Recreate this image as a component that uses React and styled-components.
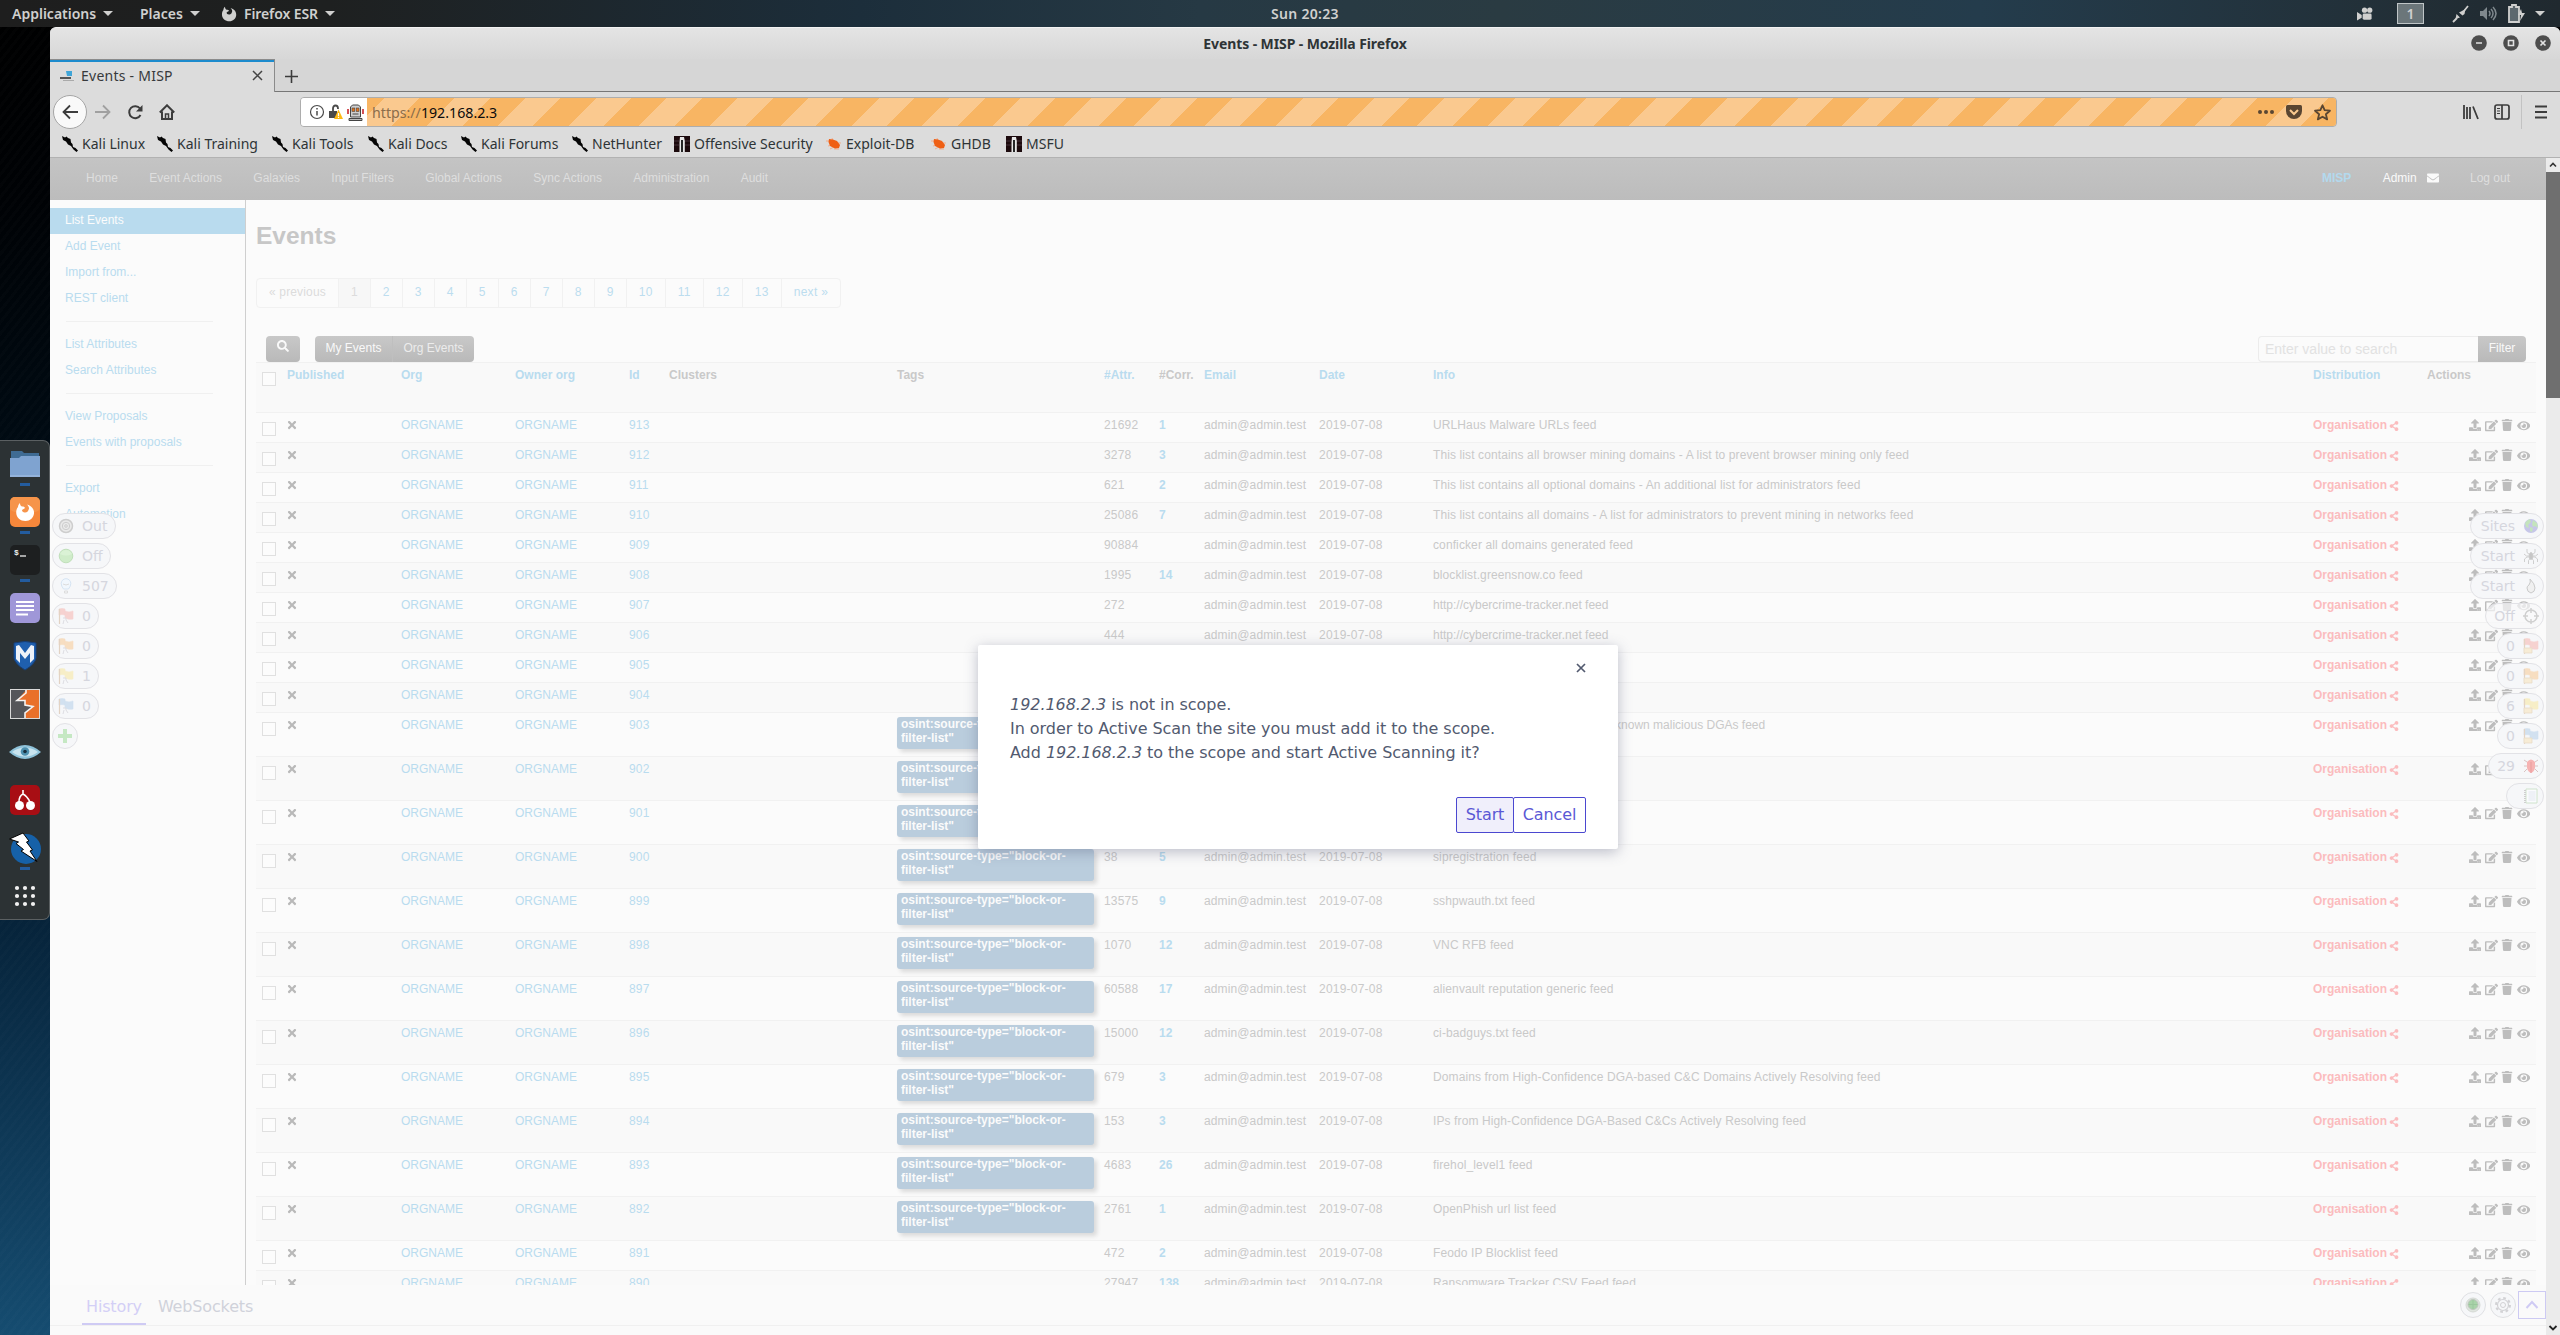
import React from "react";
import styled, { createGlobalStyle, css } from "styled-components";
import { FaUpload, FaEdit, FaTrash, FaEye, FaShareAlt, FaTimes, FaEnvelope, FaSearch } from "react-icons/fa";

const gnome = '"Noto Sans", "Open Sans", sans-serif';
const sans = '"Liberation Sans", Arial, sans-serif';
const hud = '"DejaVu Sans", sans-serif';

const Global = createGlobalStyle`
  * { box-sizing: border-box; }
  body { margin: 0; overflow: hidden; }
`;

const Desktop = styled.div`
  width: 2560px;
  height: 1335px;
  display: grid;
  grid-template-rows: 27px 1308px;
  overflow: hidden;
  font-family: ${gnome};
  background: repeating-linear-gradient(-52deg, rgba(255, 255, 255, 0.012) 0 3px, transparent 3px 7px),
    linear-gradient(#000 0, #000205 200px, #000a12 430px, #06233a 920px, #103d5c 1180px, #154c70 1335px);
`;

const Fit = styled.span`
  letter-spacing: ${(p) => p.$ls || 0}px;
  white-space: nowrap;
`;

/* ---------- Top panel ---------- */
const Panel = styled.header`
  display: grid;
  grid-template-columns: 1fr auto 1fr;
  align-items: center;
  color: #d0d0cf;
  font-size: 14px;
  font-weight: 600;
  background: linear-gradient(90deg, #1e1e1e 0, #1e2020 330px, #1c2e3b 860px, #263944 1200px, #2a3b42 1500px, #243c4c 1980px, #222f37 2400px, #20292f 2560px);
`;
const PanelMenus = styled.div`
  display: flex;
  align-items: center;
  padding-left: 12px;
`;
const PanelMenu = styled.div`
  display: flex;
  align-items: center;
  width: ${(p) => p.$w}px;
  gap: 7px;
`;
const Caret = styled.i`
  border: 5px solid transparent;
  border-top: 5px solid #d0d0cf;
  border-bottom: 0;
`;
const Clock = styled.div`
  padding-left: 50px;
`;
const PanelTray = styled.div`
  display: flex;
  align-items: center;
  justify-content: flex-end;
  padding-right: 15px;
`;
const Workspace = styled.div`
  width: 27px;
  height: 21px;
  margin: 0 28px 0 24px;
  display: grid;
  place-items: center;
  border: 1px solid #bfc5c7;
  background: #6b767a;
`;
const TrayIcon = styled.svg`
  display: block;
  flex: none;
  margin-right: ${(p) => p.$mr || 0}px;
`;

/* ---------- Dock ---------- */
const Body = styled.div`
  display: grid;
  grid-template-columns: 50px 2510px;
  min-height: 0;
`;
const DockArea = styled.aside`
  padding-top: 413px;
`;
const Dock = styled.nav`
  width: 50px;
  height: 480px;
  padding-top: 7px;
  background: #2c3234;
  border: 1px solid #5b6062;
  border-left: 0;
  border-radius: 0 7px 7px 0;
`;
const DockItem = styled.div`
  height: 48px;
  display: grid;
  grid-template-rows: 32px 3px;
  row-gap: 3px;
  justify-items: center;
  align-items: center;
`;
const Running = styled.i`
  width: 10px;
  height: 3px;
  background: #235c9f;
`;

/* ---------- Firefox window ---------- */
const Window = styled.main`
  display: flex;
  flex-direction: column;
  min-height: 0;
  overflow: hidden;
  border-radius: 6px 6px 0 0;
  background: #dcdcdc;
  border-top: 1px solid #f2f2f2;
`;
const TitleBar = styled.div`
  height: 31px;
  display: grid;
  grid-template-columns: 1fr auto 1fr;
  align-items: center;
  padding-bottom: 1px;
  background: linear-gradient(#e4e4e4, #d7d7d7);
  color: #2e3436;
  font-size: 14px;
  font-weight: 700;
`;
const WindowButtons = styled.div`
  display: flex;
  justify-content: flex-end;
  gap: 16px;
  padding-right: 9px;
`;
const TabStrip = styled.div`
  height: 33px;
  display: flex;
  background: #d6d6d6;
`;
const Tab = styled.div`
  width: 225px;
  display: flex;
  align-items: center;
  padding: 0 11px 1px 10px;
  background: #dcdcdc;
  border-top: 1px solid #8b8b8b;
  border-right: 1px solid #8b8b8b;
  box-shadow: inset 0 2px #1d8bcd;
  color: #37393b;
  font-size: 14px;
`;
const TabTitle = styled.span`
  flex: 1;
  padding-left: 7px;
`;
const TabRest = styled.div`
  flex: 1;
  padding: 8px 0 0 9px;
  border-bottom: 1px solid #777;
`;
const Toolbar = styled.div`
  height: 42px;
  display: flex;
  align-items: center;
  padding: 0 13px 2px 3px;
`;
const Back = styled.div`
  width: 34px;
  height: 34px;
  display: grid;
  place-items: center;
  border: 1px solid #a5a5a5;
  border-radius: 50%;
  background: #f9f9f9;
`;
const NavIcons = styled.div`
  display: flex;
  gap: 16px;
  padding-left: 8px;
  width: 213px;
`;
const UrlBar = styled.div`
  width: 2037px;
  height: 30px;
  display: flex;
  border: 1px solid #adadad;
  border-radius: 4px;
  overflow: hidden;
  color: #5a4632;
  font-size: 14.2px;
`;
const Identity = styled.div`
  width: 66px;
  display: flex;
  align-items: center;
  padding-left: 8px;
  gap: 4px;
  background: #fff;
`;
const Address = styled.div`
  flex: 1;
  display: flex;
  align-items: center;
  justify-content: space-between;
  padding: 0 5px;
  background: repeating-linear-gradient(-45deg, #f8b563 0 25px, #fac98f 25px 50px);
`;
const Scheme = styled.span`
  color: #8b6d4a;
`;
const Host = styled.span`
  color: #0c0c0d;
`;
const UrlActions = styled.div`
  display: flex;
  align-items: center;
  gap: 12px;
`;
const ToolbarRight = styled.div`
  flex: 1;
  display: flex;
  justify-content: flex-end;
  align-items: center;
`;
const SidebarIcon = styled.svg`
  margin-left: 15px;
`;
const Separator = styled.i`
  width: 1px;
  height: 34px;
  margin: 0 13px 0 11px;
  background: #c2c2c2;
`;
const Bookmarks = styled.div`
  height: 23px;
  display: flex;
  align-items: center;
  padding: 0 0 4px 12px;
  color: #2e3436;
  font-size: 14px;
`;
const Bookmark = styled.div`
  width: ${(p) => p.$w}px;
  display: flex;
  align-items: center;
  gap: 4px;
`;
const Viewport = styled.div`
  position: relative;
  height: 1178px;
  flex: none;
  display: grid;
  grid-template-columns: 2496px 14px;
  border-top: 1px solid #b2b2b2;
  font-family: ${sans};
  font-size: 12px;
  line-height: 20px;
`;
const Page = styled.div`
  min-width: 0;
  height: 1177px;
  display: grid;
  grid-template-rows: 42px 1085px 50px;
  background: #fbfbfb;
`;
const ScrollBar = styled.div`
  display: grid;
  grid-template-rows: 14px 226px 1fr 14px;
  height: 1177px;
  background: #ebebeb;
`;
const Thumb = styled.i`
  background: #6f6f6f;
`;

/* ---------- MISP page ---------- */
const NavBar = styled.nav`
  display: flex;
  justify-content: space-between;
  align-items: center;
  padding: 0 36px 2px 36px;
  background: linear-gradient(#c4c4c4, #bcbcbc);
  color: #dedede;
`;
const NavGroup = styled.div`
  display: flex;
  gap: 31.3px;
`;
const BrandLink = styled.b`
  color: #b3d9ee;
`;
const AdminLink = styled.span`
  display: flex;
  align-items: center;
  gap: 10px;
  color: #fafafa;
`;
const Columns = styled.div`
  display: grid;
  grid-template-columns: 196px 1fr;
  overflow: hidden;
`;
const SideNav = styled.nav`
  padding-top: 8px;
  border-right: 1px solid #cfcfcf;
  color: #b9dcef;
`;
const SideItem = styled.div`
  height: 26px;
  padding: 2px 15px;
  ${(p) => p.$active && css`background: #b9dbee; color: #fcfcfc;`}
`;
const SideRule = styled.hr`
  height: 1px;
  margin: 9px 32px 10px 16px;
  border: 0;
  background: #f0f0f0;
`;
const Content = styled.section`
  padding: 16px 10px 0 10px;
`;
const Heading = styled.h2`
  margin: 0;
  height: 62px;
  font-size: 24.5px;
  line-height: 40px;
  color: #c7c7c7;
`;
const Pager = styled.div`
  display: flex;
  width: fit-content;
  height: 30px;
  border: 1px solid #f1f1f1;
  border-radius: 4px;
  color: #bcddef;
  letter-spacing: 0.3px;
`;
const PageLink = styled.span`
  padding: 3px 12px 0;
  border-right: 1px solid #f1f1f1;
  color: ${(p) => (p.$muted ? "#dcdcdc" : "inherit")};
  background: ${(p) => (p.$current ? "#f7f7f7" : "none")};
  &:first-child { letter-spacing: 0.15px; }
  &:last-child { border-right: 0; }
`;
const Tools = styled.div`
  display: flex;
  height: 26px;
  margin-top: 28px;
  padding: 0 10px;
`;
const ButtonGroup = styled.div`
  display: flex;
  margin-right: ${(p) => (p.$attached ? 0 : 15)}px;
  border-radius: ${(p) => (p.$attached ? "0 4px 4px 0" : "4px")};
  overflow: hidden;
  background: linear-gradient(#c8c8c8, #b9b9b9);
`;
const ToolButton = styled.span`
  width: ${(p) => p.$w}px;
  padding-top: 2px;
  text-align: center;
  white-space: nowrap;
  color: ${(p) => (p.$bright ? "#f9f9f9" : "#ececec")};
  border-left: ${(p) => (p.$divided ? "1px solid #bfbfbf" : "0")};
`;
const Search = styled.div`
  display: flex;
  margin-left: auto;
`;
const SearchField = styled.div`
  width: 220px;
  padding: 2px 6px;
  border: 1px solid #ececec;
  border-right: 0;
  border-radius: 4px 0 0 4px;
  font-size: 14px;
  color: #e2e2e2;
`;
const Table = styled.div`
  width: 2280px;
  color: #c9c9c9;
`;
const Row = styled.div`
  height: ${(p) => p.$h}px;
  display: grid;
  grid-template-columns: 27px 114px 114px 114px 40px 228px 207px 55px 45px 115px 114px 880px 114px 113px;
  border-top: 1px solid #f1f1f1;
  background: ${(p) => (p.$odd ? "#f9f9f9" : "#fbfbfb")};
`;
const Cell = styled.div`
  padding: 2px 4px;
  white-space: nowrap;
  letter-spacing: ${(p) => p.$ls || 0}px;
  color: ${(p) => (p.$link ? "#b9dcef" : p.$red ? "#fbbcbe" : "inherit")};
  font-weight: ${(p) => (p.$bold ? 700 : 400)};
  svg { vertical-align: -1.5px; margin-left: -1px; }
`;
const CheckBox = styled.i`
  display: block;
  width: 14px;
  height: 14px;
  margin: 7px 0 0 2px;
  border: 1px solid #e0e0e0;
  background: #fcfcfc;
`;
const Tag = styled.div`
  width: 197px;
  height: 32px;
  margin-top: 2px;
  padding: 0 4px 2px;
  border-radius: 3px;
  background: #bacddd;
  box-shadow: 3px 3px 4px #dadada;
  color: #fbfbfb;
  font-weight: 700;
  line-height: 14px;
  white-space: normal;
`;
const Actions = styled.div`
  display: flex;
  padding: 6px 6px 0 46px;
  justify-content: space-between;
  color: #bdbdbd;
`;

/* ---------- HUD overlay ---------- */
const BottomPanel = styled.footer`
  display: flex;
  justify-content: space-between;
  padding-left: 32px;
  font: 16px ${hud};
  letter-spacing: -0.15px;
  background: linear-gradient(#fafafa 40px, #f0f0f0 40px 41px, #fafafa 41px);
`;
const BottomTabs = styled.div`
  display: flex;
`;
const BottomTab = styled.span`
  height: 40px;
  padding: 12px ${(p) => (p.$active ? 4 : 12)}px 0;
  color: ${(p) => (p.$active ? "#d3cff6" : "#d0d2da")};
  border-bottom: ${(p) => (p.$active ? "2px solid #cfcbf4" : "0")};
`;
const BottomButtons = styled.div`
  display: flex;
  padding-top: 6px;
`;
const RoundButton = styled.div`
  width: 26px;
  height: 26px;
  margin: 1px 4px 0 0;
  display: grid;
  place-items: center;
  border: 1px solid #dfe0e3;
  border-radius: 50%;
  background: #f6f7f9;
  &:nth-child(2) { margin-right: 2px; }
`;
const ExpandButton = styled.div`
  width: 28px;
  height: 28px;
  display: grid;
  place-items: center;
  border: 1px solid #cdcaf3;
`;
const Pills = styled.div`
  position: absolute;
  top: 355px;
  ${(p) => (p.$right ? "right: 16px; align-items: flex-end;" : "left: 2px; align-items: flex-start;")}
  display: flex;
  flex-direction: column;
  gap: 4px;
`;
const Pill = styled.div`
  width: ${(p) => p.$w}px;
  height: 26px;
  display: flex;
  align-items: center;
  justify-content: ${(p) => (p.$right ? "flex-end" : "flex-start")};
  gap: 8px;
  padding: 0 ${(p) => (p.$right ? 4 : 5)}px;
  border: 1px solid #e2e2e6;
  border-radius: 13px;
  background: ${(p) => (p.$ghost ? "rgba(248, 248, 250, 0.7)" : "#f6f7f9")};
  color: #d5d6de;
  font: 14px ${hud};
`;
const Dialog = styled.div`
  position: absolute;
  left: 928px;
  top: 487px;
  width: 640px;
  height: 204px;
  padding: 12px 32px 0;
  display: flex;
  flex-direction: column;
  border-radius: 2px;
  background: #fff;
  box-shadow: 0 3px 14px rgba(70, 75, 110, 0.35);
  color: #525a6f;
  font: 16px/24px ${hud};
  letter-spacing: -0.05px;
`;
const DialogClose = styled.svg`
  flex: none;
  align-self: flex-end;
  margin: 6px 0 0;
`;
const Message = styled.p`
  margin: 20px 0 32px;
`;
const DialogButtons = styled.div`
  display: flex;
  justify-content: flex-end;
`;
const DialogButton = styled.button`
  width: ${(p) => p.$w}px;
  height: 36px;
  margin: 0 0 0 -1px;
  padding: 0 0 2px;
  border: 1px solid #4b48d0;
  border-radius: 2px;
  background: ${(p) => (p.$primary ? "#f0effb" : "#fff")};
  color: #5b58d5;
  font: 16px ${hud};
  letter-spacing: -0.1px;
`;

/* ---------- Drawings ---------- */
const KaliMark = () => (
  <svg width="16" height="16" viewBox="0 0 16 16">
    <path d="M0 0l3 1.500L4.500.5 6 2l2.500 1 .5 3.500 1.500 1.500.5 3 2.500 1L16 14.500 14.500 16l-3-2.500L9 10 6 8.500 4 5.500 1 4z" fill="#050505" />
  </svg>
);
const OffsecMark = () => (
  <svg width="16" height="16" viewBox="0 0 16 16">
    <rect width="16" height="16" fill="#1c0a0d" />
    <path d="M0 5h5M11 5h5M0 9h5M11 9h5" stroke="#44303a" />
    <path d="M6 1h4l.8 4v11H5.500V6z" fill="#e8e8e8" />
    <path d="M8 4v12" stroke="#111" strokeWidth="1.800" />
  </svg>
);
const BugMark = () => (
  <svg width="16" height="16" viewBox="0 0 16 16">
    <path d="M0 5h4M2 10l4-1M4 13l4-2M6 2l1 3M12 7h3M8 13h5" stroke="#f2ae8c" strokeWidth="1" />
    <path d="M3 3l4 .5L11 5l3 4-1 3-4 .5L4 10 2.500 6z" fill="#ef5f14" />
  </svg>
);
const marks = { kali: KaliMark, off: OffsecMark, bug: BugMark };

const Firefox = ({ size, color }) => (
  <svg width={size} height={size} viewBox="0 0 20 20">
    <path fill={color} d="M5 1c0 2 .6 3 2 3.600C8.600 4.600 9.500 5 10 6c-.6 1-2 1-3 2 0 1.500 1 2.500 3 2.500 1.500 0 3-.8 3.500-2.500C14.500 6.500 14 4.500 12 2.500 16 3.500 19.500 7 19 11.500 18.500 16 15 19 10.500 19 5.500 19 1.200 15.500 1.200 10.500 1.200 8 2 6 3 5 3 3 4 2 5 1z" />
  </svg>
);

const DockArt = {
  folder: (
    <svg width="30" height="26" viewBox="0 0 30 26">
      <path d="M1 0h11l2 2h15v8H1z" fill="#3f6b93" />
      <path d="M0 7h9l2-2h19v21H0z" fill="#7fa3d0" />
      <path d="M0 25h30" stroke="#a9c2e4" />
    </svg>
  ),
  firefox: (
    <svg width="30" height="30" viewBox="0 0 30 30">
      <rect width="30" height="30" rx="5" fill="#f5873b" />
      <rect width="30" height="15" rx="5" fill="#f6944a" />
      <g transform="translate(5 5)"><Firefox size={20} color="#fff" /></g>
    </svg>
  ),
  terminal: (
    <svg width="30" height="30" viewBox="0 0 30 30">
      <rect width="30" height="30" rx="5" fill="#1d1f20" />
      <text x="4" y="10" fill="#eee" fontSize="8" fontFamily="Liberation Mono, monospace" fontWeight="700">$</text>
      <path d="M10 11h6" stroke="#eee" strokeWidth="1.300" />
    </svg>
  ),
  notes: (
    <svg width="30" height="30" viewBox="0 0 30 30">
      <rect width="30" height="30" rx="5" fill="#9f97d8" />
      <path d="M6 9h18M6 13h18M6 17h18M6 21.500h12" stroke="#fff" strokeWidth="2" />
    </svg>
  ),
  metasploit: (
    <svg width="24" height="30" viewBox="0 0 24 30">
      <path d="M1 2q11-3 22 0v15q-1 6-11 12Q2 23 1 17z" fill="#1f5fae" stroke="#173f77" />
      <path d="M3 18V5l3-1 6 8 6-8 3 1v13l-4 4V12l-5 6-5-6v10z" fill="#eef2f8" />
    </svg>
  ),
  burp: (
    <svg width="30" height="30" viewBox="0 0 30 30">
      <rect x=".5" y=".5" width="29" height="29" fill="#55565a" stroke="#d9d9d9" />
      <path d="M16 1h13v28H15v-5l8-6.500-8-1.500v-4.500H7z" fill="#e9702a" />
      <path d="M16 1v3l-9 7.500h8V16l8 1.500-8 6.500v5" fill="none" stroke="#f3f3f3" strokeWidth="1.600" />
    </svg>
  ),
  eye: (
    <svg width="32" height="16" viewBox="0 0 32 16">
      <path d="M0 8Q8 1 16 1t16 7q-8 7-16 7T0 8z" fill="#8fc3da" />
      <path d="M3 8q6-4.500 13-4.500T29 8q-6 4.500-13 4.500T3 8z" fill="#c9e4ef" />
      <circle cx="16" cy="7.500" r="4.300" fill="#4d90af" />
      <circle cx="16" cy="7.500" r="1.800" fill="#18303f" />
    </svg>
  ),
  cherry: (
    <svg width="30" height="30" viewBox="0 0 30 30">
      <rect width="30" height="30" rx="5" fill="#a80e14" />
      <path d="M9 17q0-6 4-8V5M13 9q4 2 7 8" fill="none" stroke="#fff" strokeWidth="1.600" />
      <circle cx="9.500" cy="20.500" r="4.500" fill="#fff" />
      <circle cx="20.500" cy="20.500" r="4.500" fill="#fff" />
    </svg>
  ),
  zap: (
    <svg width="34" height="32" viewBox="0 0 34 32">
      <circle cx="18" cy="17" r="15" fill="#1661a8" />
      <path d="M1.500 7L15 1l6 8-2.500 1 6 8-2.500 1 7 10.500L13 19l2.500-1.500L8 11.500 10.500 10z" fill="#fff" stroke="#000" />
    </svg>
  ),
  grid: (
    <svg width="22" height="22" viewBox="0 0 22 22" fill="#f1f1f1">
      {[3, 11, 19].map((y) => [3, 11, 19].map((x) => <circle key={x + "-" + y} cx={x} cy={y} r="2.100" />))}
    </svg>
  ),
};
const dock = [["folder", 1], ["firefox", 1], ["terminal", 1], ["notes"], ["metasploit"], ["burp"], ["eye"], ["cherry"], ["zap", 1], ["grid"]];

const Flag = ({ color, right }) => (
  <svg width="16" height="16" viewBox="0 0 16 16">
    <path d="M1 1q3-1 6 0v6q-3-1-6 0zM7 3q4 2 8 0v8q-4 1-8-1z" fill={color} stroke={color} strokeWidth=".6" opacity=".9" />
    <path d="M1.500 1v15" stroke="#e3d3c3" strokeWidth="1.200" />
    {right ? <path d="M1 10h8v5H1z" fill="#f7ecd6" stroke="#e9dcc8" strokeWidth=".8" /> : <path d="M5 10h3v2l2 3M6 12l-1 4" fill="none" stroke="#dddde2" />}
  </svg>
);
const HudArt = {
  target: (
    <svg width="16" height="16" viewBox="0 0 16 16" fill="none" stroke="#cdcdcd">
      <circle cx="8" cy="8" r="6.500" strokeWidth="1.500" fill="#eaeaea" />
      <circle cx="8" cy="8" r="3.700" /><circle cx="8" cy="8" r="1.300" />
    </svg>
  ),
  green: (
    <svg width="16" height="16" viewBox="0 0 16 16">
      <circle cx="8" cy="8" r="6.800" fill="#cfecc9" stroke="#c0dfba" />
      <path d="M2 6q6 3 12 0-2-4-6-4T2 6z" fill="#daf2d5" />
    </svg>
  ),
  bulb: (
    <svg width="16" height="16" viewBox="0 0 16 16" fill="#f1f7fd" stroke="#d5e4f3">
      <path d="M5.500 11Q3.200 8 3.200 5.500a4.800 4.800 0 0 1 9.600 0Q12.800 8 10.500 11z" />
      <path d="M5 6q3 2 6 0M6.500 13h3v2h-3z" stroke="#dcdcdc" fill="none" />
    </svg>
  ),
  plus: (
    <svg width="14" height="14" viewBox="0 0 14 14"><path d="M5 0h4v5h5v4H9v5H5V9H0V5h5z" fill="#c5e8c3" /></svg>
  ),
  globe: (
    <svg width="16" height="16" viewBox="0 0 16 16">
      <circle cx="8" cy="8" r="7" fill="#c6c6e8" />
      <path d="M2 5q2-3 5-4l1 3-3 3 1 3-3-1zM10 2l4 3 1 5-3-2-2 1-1-3z" fill="#c4e4bd" />
      <path d="M7 9l3 1-1 4-2-1z" fill="#c4e4bd" />
    </svg>
  ),
  spider: (
    <svg width="16" height="16" viewBox="0 0 16 16" fill="none" stroke="#c9c9c9" strokeWidth=".9">
      <path d="M7 7L4 4.500V1M7 8H3.500L1 6M7 9H4l-2.500 2v3M7.500 10l-2 2.500V16M9 7l3-2.500V1M9 8h3.500L15 6M9 9h3l2.500 2v3M8.500 10l2 2.500V16" />
      <ellipse cx="8" cy="8" rx="1.800" ry="3.500" fill="#c6c6c6" />
    </svg>
  ),
  flame: (
    <svg width="16" height="16" viewBox="0 0 16 16">
      <path d="M7 1q5 5 5 9t-4 5q-4-1-4-5 0-2 2-3 2-3 1-6z" fill="#f0f0f0" stroke="#cacaca" />
    </svg>
  ),
  cross: (
    <svg width="16" height="16" viewBox="0 0 16 16" fill="none" stroke="#cfcfcf" strokeWidth="1.500">
      <circle cx="8" cy="8" r="6" /><path d="M8 0v5M8 11v5M0 8h5M11 8h5" />
    </svg>
  ),
  bug: (
    <svg width="16" height="16" viewBox="0 0 16 16">
      <path d="M4 4L1 2M4 8H1M4 11l-3 3M12 4l3-2M12 8h3M12 11l3 3" stroke="#d9c2c2" />
      <path d="M4 4q4-5 8 0v6q-1 4-4 5-3-1-4-5z" fill="#f6b3b3" /><path d="M8 4v11" stroke="#e99c9c" />
    </svg>
  ),
  note: (
    <svg width="16" height="16" viewBox="0 0 16 16">
      <path d="M3 1h11v14H3z" fill="#fafbfd" stroke="#cfe3cc" /><path d="M5.500 4h7M5.500 6h7M5.500 8h7M5.500 10h7M5.500 12h7" stroke="#e2e7f0" />
      <path d="M2 2v13" stroke="#cfcfcf" strokeDasharray="1 1" strokeWidth="2" />
    </svg>
  ),
  gear: (
    <svg width="18" height="18" viewBox="0 0 18 18" fill="none" stroke="#d2d2d5">
      <circle cx="9" cy="9" r="7" strokeWidth="2" strokeDasharray="2.750 2.750" /><circle cx="9" cy="9" r="5.500" strokeWidth="1.200" /><circle cx="9" cy="9" r="2.500" />
    </svg>
  ),
  radar: (
    <svg width="16" height="16" viewBox="0 0 16 16">
      <circle cx="8" cy="8" r="7" fill="#dfe5df" stroke="#d5d9d5" /><circle cx="8" cy="7.500" r="5" fill="#a9d3a9" stroke="#bfc6bf" />
      <path d="M8 3v9M3.500 7.500h9" stroke="#9bc79d" />
    </svg>
  ),
};
const red = "#f7cfcc", orange = "#f8dcbc", yellow = "#f8eec2", blue = "#cfdff0";
const leftPills = [
  [64, "Out", HudArt.target], [59, "Off", HudArt.green], [65, "507", HudArt.bulb],
  [47, "0", <Flag color={red} />], [47, "0", <Flag color={orange} />], [47, "1", <Flag color={yellow} />], [47, "0", <Flag color={blue} />],
  [26, "", HudArt.plus],
];
const rightPills = [
  [74, "Sites", HudArt.globe], [74, "Start", HudArt.spider], [74, "Start", HudArt.flame], [59, "Off", HudArt.cross, true],
  [47, "0", <Flag right color={red} />], [47, "0", <Flag right color={orange} />], [47, "6", <Flag right color={yellow} />], [47, "0", <Flag right color={blue} />],
  [56, "29", HudArt.bug], [38, "", HudArt.note],
];

/* ---------- Data ---------- */
const bookmarks = [
  [95, "Kali Linux", "kali"], [115, "Kali Training", "kali"], [96, "Kali Tools", "kali"], [93, "Kali Docs", "kali"], [111, "Kali Forums", "kali"],
  [102, "NetHunter", "kali"], [152, "Offensive Security", "off"], [105, "Exploit-DB", "bug"], [75, "GHDB", "bug"], [80, "MSFU", "off"],
];
const sidebar = [
  ["List Events", "Add Event", "Import from...", "REST client"],
  ["List Attributes", "Search Attributes"],
  ["View Proposals", "Events with proposals"],
  ["Export", "Automation"],
];
const headers = [["", 0], ["Published", 1], ["Org", 1], ["Owner org", 1], ["Id", 1], ["Clusters", 0], ["Tags", 0], ["#Attr.", 1], ["#Corr.", 0], ["Email", 1], ["Date", 1], ["Info", 1], ["Distribution", 1], ["Actions", 0]];
const events = [
  [913, 21692, 1, "URLHaus Malware URLs feed"],
  [912, 3278, 3, "This list contains all browser mining domains - A list to prevent browser mining only feed"],
  [911, 621, 2, "This list contains all optional domains - An additional list for administrators feed"],
  [910, 25086, 7, "This list contains all domains - A list for administrators to prevent mining in networks feed"],
  [909, 90884, "", "conficker all domains generated feed"],
  [908, 1995, 14, "blocklist.greensnow.co feed"],
  [907, 272, "", "http://cybercrime-tracker.net feed"],
  [906, 444, "", "http://cybercrime-tracker.net feed"],
  [905, "", "", ""],
  [904, "", "", ""],
  [903, "", "", "Domain feed covering domains of known malicious DGAs feed", 1],
  [902, "", "", "", 1],
  [901, "", "", "", 1],
  [900, 38, 5, "sipregistration feed", 1],
  [899, 13575, 9, "sshpwauth.txt feed", 1],
  [898, 1070, 12, "VNC RFB feed", 1],
  [897, 60588, 17, "alienvault reputation generic feed", 1],
  [896, 15000, 12, "ci-badguys.txt feed", 1],
  [895, 679, 3, "Domains from High-Confidence DGA-based C&C Domains Actively Resolving feed", 1],
  [894, 153, 3, "IPs from High-Confidence DGA-Based C&Cs Actively Resolving feed", 1],
  [893, 4683, 26, "firehol_level1 feed", 1],
  [892, 2761, 1, "OpenPhish url list feed", 1],
  [891, 472, 2, "Feodo IP Blocklist feed"],
  [890, 27947, 138, "Ransomware Tracker CSV Feed feed"],
];

const EventRow = ({ event: [id, attr, corr, info, tagged], odd }) => (
  <Row $h={tagged ? 44 : 30} $odd={odd}>
    <Cell><CheckBox /></Cell>
    <Cell><FaTimes size={12} color="#b9b9b9" /></Cell>
    <Cell $link>ORGNAME</Cell>
    <Cell $link>ORGNAME</Cell>
    <Cell $link $ls={0.2}>{id}</Cell>
    <Cell />
    <Cell>{tagged && <Tag>osint:source-type="block-or-filter-list"</Tag>}</Cell>
    <Cell $ls={0.2}>{attr}</Cell>
    <Cell $link $bold>{corr}</Cell>
    <Cell $ls={0.12}>admin@admin.test</Cell>
    <Cell $ls={0.22}>2019-07-08</Cell>
    <Cell $ls={info.startsWith("http") || id === 903 ? 0 : 0.11}>{info}</Cell>
    <Cell $red $bold>Organisation <FaShareAlt size={10} /></Cell>
    <Actions><FaUpload size={12} /><FaEdit size={13} /><FaTrash size={12} /><FaEye size={13.5} /></Actions>
  </Row>
);

const TrayBar = () => (
  <PanelTray>
    <TrayIcon width="16" height="14" viewBox="0 0 17 14" fill="#d0d0cf">
      <circle cx="8" cy="3" r="2.800" /><circle cx="13.500" cy="3" r="2.800" /><rect x="6" y="6.500" width="9.500" height="6.500" rx="1.500" /><path d="M0 5l5 3v3l-5 3z" />
    </TrayIcon>
    <Workspace>1</Workspace>
    <TrayIcon $mr={11} width="17" height="18" viewBox="0 0 17 18">
      <path d="M1 17l4-4M12 6l4-5" stroke="#d0d0cf" strokeWidth="1.800" />
      <path d="M3.500 14l1-5L8 12.500zM9 6.500L13.500 4l-1 5-2 1.500L7 7.500z" fill="#d0d0cf" />
    </TrayIcon>
    <TrayIcon $mr={11} width="17" height="17" viewBox="0 0 17 17" fill="none" stroke="#7f888d" strokeWidth="1.500">
      <path d="M0 6h3l4-4v13l-4-4H0z" fill="#7f888d" stroke="none" /><path d="M9 6q2 2.500 0 5M11 4q4 4.500 0 9M13 2q6 6.500 0 13" />
    </TrayIcon>
    <TrayIcon $mr={10} width="17" height="19" viewBox="0 0 17 19">
      <path d="M1 3h3V1h4v2h3v15H1z" fill="#5d686e" stroke="#d0d0cf" strokeWidth="1.800" /><path d="M13 5l-3 6h3l-1 6 5-8h-3z" fill="#d0d0cf" />
    </TrayIcon>
    <Caret />
  </PanelTray>
);

export default function App() {
  return (
    <Desktop>
      <Global />
      <Panel>
        <PanelMenus>
          <PanelMenu $w={128}><Fit>Applications</Fit><Caret /></PanelMenu>
          <PanelMenu $w={81}><Fit>Places</Fit><Caret /></PanelMenu>
          <PanelMenu $w={130}><Firefox size={16} color="#d0d0cf" /><Fit $ls={-0.1}>Firefox ESR</Fit><Caret /></PanelMenu>
        </PanelMenus>
        <Clock><Fit $ls={0.3}>Sun 20:23</Fit></Clock>
        <TrayBar />
      </Panel>
      <Body>
        <DockArea>
          <Dock>
            {dock.map(([name, running]) => (
              <DockItem key={name}>{DockArt[name]}{running && <Running />}</DockItem>
            ))}
          </Dock>
        </DockArea>
        <Window>
          <TitleBar>
            <span />
            <Fit $ls={-0.1}>Events - MISP - Mozilla Firefox</Fit>
            <WindowButtons>
              {["M5 8h6", "M5.500 5.500h5v5h-5z", "M5.500 5.500l5 5M10.500 5.500l-5 5"].map((d) => (
                <svg key={d} width="16" height="16" viewBox="0 0 16 16">
                  <circle cx="8" cy="8" r="7.800" fill="#4d4d4d" /><path d={d} stroke="#e2e2e2" strokeWidth="1.600" fill="none" />
                </svg>
              ))}
            </WindowButtons>
          </TitleBar>
          <TabStrip>
            <Tab>
              <svg width="14" height="12" viewBox="0 0 14 12"><path d="M6 1h6v5H7z" fill="#3fa5d8" /><path d="M0 7h11v2H0z" fill="#555" /><path d="M3 10.500h11" stroke="#aaa" /></svg>
              <TabTitle><Fit $ls={0.25}>Events - MISP</Fit></TabTitle>
              <svg width="11" height="11" viewBox="0 0 11 11"><path d="M1 1l9 9M10 1l-9 9" stroke="#444" strokeWidth="1.500" /></svg>
            </Tab>
            <TabRest>
              <svg width="15" height="15" viewBox="0 0 15 15"><path d="M7.500 1v13M1 7.500h13" stroke="#3c3c3c" strokeWidth="1.600" /></svg>
            </TabRest>
          </TabStrip>
          <Toolbar>
            <Back>
              <svg width="16" height="16" viewBox="0 0 16 16" fill="none" stroke="#3c3c3c" strokeWidth="1.800"><path d="M16 8H1.500M8 1.500L1.500 8 8 14.500" /></svg>
            </Back>
            <NavIcons>
              <svg width="16" height="16" viewBox="0 0 16 16" fill="none" stroke="#a0a0a0" strokeWidth="1.800"><path d="M0 8h14.500M8 1.500L14.500 8 8 14.500" /></svg>
              <svg width="16" height="16" viewBox="0 0 16 16" fill="none" stroke="#3c3c3c" strokeWidth="2"><path d="M13 4.500A6 6 0 1 0 13.500 11" /><path d="M15.500 1v6.500H9z" fill="#3c3c3c" stroke="none" /></svg>
              <svg width="16" height="16" viewBox="0 0 16 16" fill="none" stroke="#3c3c3c" strokeWidth="2"><path d="M.8 8.500L8 1.300l7.200 7.200M3 7.500V15h10V7.500" /><path d="M6.500 15v-5h3v5" strokeWidth="1.500" /></svg>
            </NavIcons>
            <UrlBar>
              <Identity>
                <svg width="16" height="16" viewBox="0 0 16 16" fill="none" stroke="#4a4a4a"><circle cx="8" cy="8" r="6.500" strokeWidth="1.200" /><path d="M8 7v4.500M8 4v1.600" strokeWidth="1.500" /></svg>
                <svg width="14" height="16" viewBox="0 0 14 16"><path d="M4 7V4.500Q4 1.500 6.500 1.500T9 4.500V5" fill="none" stroke="#4a4a4a" strokeWidth="1.800" /><path d="M0 7h8v7H0z" fill="#4a4a4a" /><path d="M9.500 5.500l4.500 9.500H5z" fill="#fdb813" /><path d="M9.500 9v3M9.500 12.800V14" stroke="#fff" strokeWidth="1.200" /></svg>
                <svg width="17" height="17" viewBox="0 0 17 17"><path d="M3.500 3l2-2h6l2 2v10h-10z" fill="#cfcfcf" stroke="#444" strokeWidth="1" /><path d="M1 5v5M16 5v5" stroke="#c9252c" strokeWidth="1.600" /><rect x="5" y="4" width="2.800" height="3.500" fill="#e5731a" stroke="#444" strokeWidth=".6" /><rect x="9.200" y="4" width="2.800" height="3.500" fill="#e5731a" stroke="#444" strokeWidth=".6" /><path d="M5.500 10h6M2 14.500h13v2H2z" stroke="#444" fill="#bbb" /></svg>
              </Identity>
              <Address>
                <Fit><Scheme>https://</Scheme><Host>192.168.2.3</Host></Fit>
                <UrlActions>
                  <svg width="16" height="16" viewBox="0 0 16 16" fill="#5a4632"><circle cx="2" cy="8" r="2" /><circle cx="8" cy="8" r="2" /><circle cx="14" cy="8" r="2" /></svg>
                  <svg width="16" height="16" viewBox="0 0 16 16"><path d="M1.500 1h13q1.500 0 1.500 1.500V7a8 8 0 0 1-16 0V2.500Q0 1 1.500 1z" fill="#5a4632" /><path d="M4 6l4 4 4-4" fill="none" stroke="#fac98f" strokeWidth="2" /></svg>
                  <svg width="17" height="17" viewBox="0 0 16 16"><path d="M8 1.200l2 4.600 5 .5-3.800 3.300 1.200 4.900L8 12l-4.400 2.500 1.200-4.900L1 6.300l5-.5z" fill="none" stroke="#5a4632" strokeWidth="1.700" strokeLinejoin="round" /></svg>
                </UrlActions>
              </Address>
            </UrlBar>
            <ToolbarRight>
              <svg width="16" height="16" viewBox="0 0 16 16" stroke="#3c3c3c" strokeWidth="1.800"><path d="M1 1v14M4 3v12M7 3v12M10 2.500l5 12.500" /></svg>
              <SidebarIcon width="16" height="16" viewBox="0 0 16 16" fill="none" stroke="#3c3c3c" strokeWidth="1.700"><rect x="1" y="1" width="14" height="14" rx="2" /><path d="M8 1v14" /><path d="M3 4.500h3M3 7h3M3 9.500h3" strokeWidth="1" /></SidebarIcon>
              <Separator />
              <svg width="12" height="14" viewBox="0 0 12 14" stroke="#3c3c3c" strokeWidth="2"><path d="M0 1.500h12M0 7h12M0 12.500h12" /></svg>
            </ToolbarRight>
          </Toolbar>
          <Bookmarks>
            {bookmarks.map(([w, label, icon]) => {
              const Mark = marks[icon];
              return <Bookmark key={label} $w={w}><Mark /><Fit>{label}</Fit></Bookmark>;
            })}
          </Bookmarks>
          <Viewport>
            <Page>
              <NavBar>
                <NavGroup>
                  {["Home", "Event Actions", "Galaxies", "Input Filters", "Global Actions", "Sync Actions", "Administration", "Audit"].map((t) => <span key={t}>{t}</span>)}
                </NavGroup>
                <NavGroup>
                  <BrandLink>MISP</BrandLink>
                  <AdminLink>Admin<FaEnvelope size={12} /></AdminLink>
                  <span>Log out</span>
                </NavGroup>
              </NavBar>
              <Columns>
                <SideNav>
                  {sidebar.map((group, g) => (
                    <React.Fragment key={g}>
                      {g > 0 && <SideRule />}
                      {group.map((t) => <SideItem key={t} $active={t === "List Events"}>{t}</SideItem>)}
                    </React.Fragment>
                  ))}
                </SideNav>
                <Content>
                  <Heading>Events</Heading>
                  <Pager>
                    <PageLink $muted>« previous</PageLink>
                    <PageLink $muted $current>1</PageLink>
                    {[2, 3, 4, 5, 6, 7, 8, 9, 10, 11, 12, 13].map((n) => <PageLink key={n}>{n}</PageLink>)}
                    <PageLink>next »</PageLink>
                  </Pager>
                  <Tools>
                    <ButtonGroup><ToolButton $w={34} $bright><FaSearch size={12} /></ToolButton></ButtonGroup>
                    <ButtonGroup>
                      <ToolButton $w={77} $bright>My Events</ToolButton>
                      <ToolButton $w={82} $divided>Org Events</ToolButton>
                    </ButtonGroup>
                    <Search>
                      <SearchField>Enter value to search</SearchField>
                      <ButtonGroup $attached><ToolButton $w={48} $bright>Filter</ToolButton></ButtonGroup>
                    </Search>
                  </Tools>
                  <Table>
                    <Row $h={50} $odd>
                      {headers.map(([t, link], i) => <Cell key={i} $bold $link={link}>{i ? t : <CheckBox />}</Cell>)}
                    </Row>
                    {events.map((e, i) => <EventRow key={e[0]} event={e} odd={i % 2 === 1} />)}
                  </Table>
                </Content>
              </Columns>
              <BottomPanel>
                <BottomTabs>
                  <BottomTab $active>History</BottomTab>
                  <BottomTab>WebSockets</BottomTab>
                </BottomTabs>
                <BottomButtons>
                  <RoundButton>{HudArt.radar}</RoundButton>
                  <RoundButton>{HudArt.gear}</RoundButton>
                  <ExpandButton>
                    <svg width="14" height="10" viewBox="0 0 14 10"><path d="M1.500 8L7 2l5.500 6" fill="none" stroke="#cfcbf4" strokeWidth="2" /></svg>
                  </ExpandButton>
                </BottomButtons>
              </BottomPanel>
            </Page>
            <ScrollBar>
              <svg width="14" height="14" viewBox="0 0 14 14"><path d="M4 8.500l3-3 3 3" fill="none" stroke="#333" strokeWidth="1.600" /></svg>
              <Thumb />
              <span />
              <svg width="14" height="14" viewBox="0 0 14 14"><path d="M3.500 5l3.500 3.500L10.500 5" fill="none" stroke="#222" strokeWidth="1.800" /></svg>
            </ScrollBar>
            <Pills>
              {leftPills.map(([w, label, art], i) => <Pill key={i} $w={w}>{art}{label && <span>{label}</span>}</Pill>)}
            </Pills>
            <Pills $right>
              {rightPills.map(([w, label, art, ghost], i) => <Pill key={i} $w={w} $right $ghost={ghost}>{label && <span>{label}</span>}{art}</Pill>)}
            </Pills>
            <Dialog>
              <DialogClose width="10" height="10" viewBox="0 0 10 10"><path d="M1 1l8 8M9 1L1 9" stroke="#525a6f" strokeWidth="1.700" /></DialogClose>
              <Message>
                <i>192.168.2.3</i> is not in scope.<br />
                In order to Active Scan the site you must add it to the scope.<br />
                Add <i>192.168.2.3</i> to the scope and start Active Scanning it?
              </Message>
              <DialogButtons>
                <DialogButton $w={58} $primary>Start</DialogButton>
                <DialogButton $w={73}>Cancel</DialogButton>
              </DialogButtons>
            </Dialog>
          </Viewport>
        </Window>
      </Body>
    </Desktop>
  );
}
